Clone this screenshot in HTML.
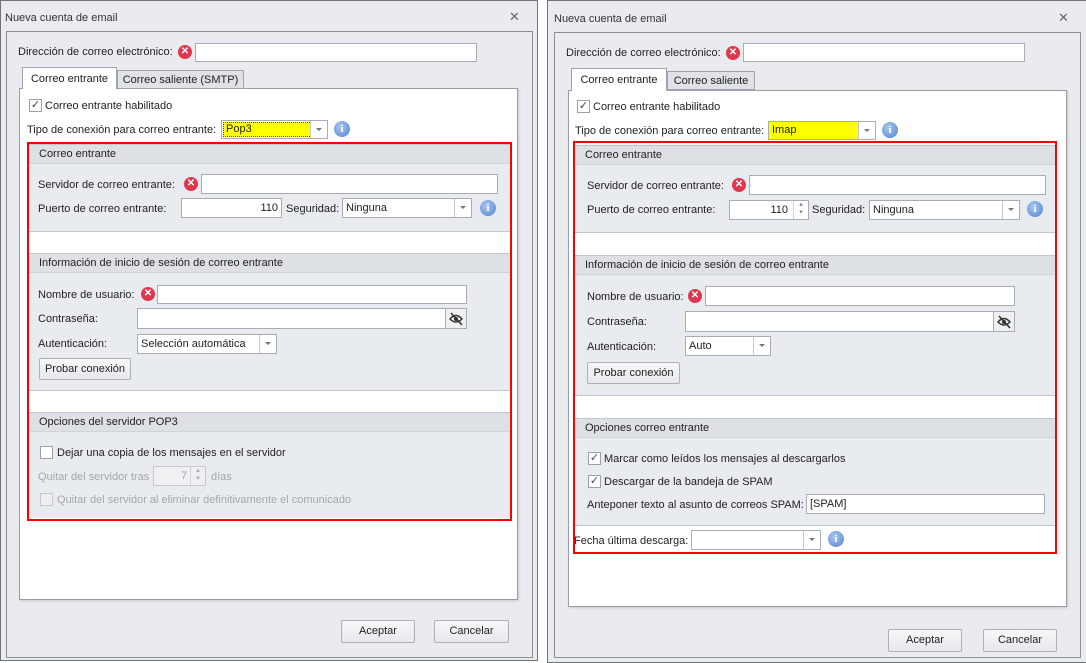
<!DOCTYPE html>
<html><head><meta charset="utf-8">
<style>
*{box-sizing:border-box;margin:0;padding:0}
body{width:1086px;height:662px;background:#fff;position:relative;overflow:hidden;font-family:"Liberation Sans",sans-serif;font-size:11px;color:#222}
.a{position:absolute}
.win{position:absolute;background:#e9ebee;border:1px solid #6f747a}
.frame{position:absolute;border:1px solid #8a8f96}
.t{position:absolute;white-space:nowrap;line-height:14px}
.dis{color:#a3a7ac}
.in{position:absolute;background:#fff;border:1px solid #a9adb3;white-space:nowrap}
.page{position:absolute;background:#fff;border:1px solid #9a9ea4;box-shadow:1px 1px 2px rgba(0,0,0,.15)}
.tab{position:absolute;border:1px solid #a0a4aa;background:#dfe2e6;text-align:center;line-height:18px;white-space:nowrap}
.tab.on{background:#fff;border-bottom:none}
.red{position:absolute;border:2px solid #f00;z-index:5}
.gh{position:absolute;background:#dde0e5;border-top:1px solid #c3c7cc;border-bottom:1px solid #d0d3d7;line-height:18px;padding-left:10px;white-space:nowrap}
.gc{position:absolute;background:#e8ebef;border-bottom:1px solid #c3c7cc}
.err{position:absolute;width:14px;height:14px;border-radius:50%;background:#e0374f;color:#fff;font-size:10px;font-weight:bold;line-height:14px;text-align:center}
.info{position:absolute;width:16px;height:16px;border-radius:50%;background:radial-gradient(circle at 40% 35%,#a9c7f0,#4f82d2);color:#fff;font:bold 11px "Liberation Serif",serif;line-height:16px;text-align:center}
.dd{position:absolute;top:0;right:0;bottom:0;width:17px;border-left:1px solid #c5c8cc;background:#fff}
.dd:after{content:"";position:absolute;left:5px;top:7px;border:3px solid transparent;border-top:3px solid #777}
.cb{position:absolute;width:13px;height:13px;border:1px solid #9da1a6;background:#fff;font-size:11px;line-height:11px;text-align:center;color:#444}
.btn{position:absolute;border:1px solid #adb1b6;border-radius:2px;background:linear-gradient(#f6f7f8,#e6e8eb);text-align:center;line-height:21px;white-space:nowrap}
</style></head><body>

<!-- LEFT WINDOW -->
<div class="win" style="left:0;top:0;width:538px;height:661px"></div>
<div class="t" style="left:5px;top:11px;color:#333">Nueva cuenta de email</div>
<div class="t" style="left:509px;top:10px;color:#666;font-size:13px">✕</div>
<div class="frame" style="left:6px;top:31px;width:527px;height:627px"></div>
<div class="t" style="left:18px;top:45px">Dirección de correo electrónico:</div>
<div class="err" style="left:178px;top:45px">✕</div>
<div class="in" style="left:195px;top:43px;width:282px;height:19px"></div>
<div class="page" style="left:19px;top:88px;width:499px;height:512px"></div>
<div class="tab" style="left:117px;top:70px;width:127px;height:19px">Correo saliente (SMTP)</div>
<div class="tab on" style="left:22px;top:67px;width:95px;height:22px;line-height:22px">Correo entrante</div>
<div class="cb" style="left:29px;top:99px">✓</div>
<div class="t" style="left:45px;top:99px">Correo entrante habilitado</div>
<div class="t" style="left:27px;top:123px">Tipo de conexión para correo entrante:</div>
<div class="in" style="left:221px;top:120px;width:107px;height:19px"><div class="a" style="left:1px;top:1px;width:93px;height:15px;background:#ff0;border:1px dotted #444;padding-left:2px;line-height:13px">Pop3</div><div class="dd"></div></div>
<div class="info" style="left:334px;top:121px">i</div>
<div class="red" style="left:27px;top:142px;width:485px;height:379px"></div>
<div class="gh" style="left:29px;top:144px;width:481px;height:20px">Correo entrante</div>
<div class="gc" style="left:29px;top:164px;width:481px;height:68px"></div>
<div class="t" style="left:38px;top:178px">Servidor de correo entrante:</div>
<div class="err" style="left:184px;top:177px">✕</div>
<div class="in" style="left:201px;top:174px;width:297px;height:20px"></div>
<div class="t" style="left:38px;top:202px">Puerto de correo entrante:</div>
<div class="in" style="left:181px;top:198px;width:101px;height:20px;text-align:right;padding-right:3px;line-height:18px">110</div>
<div class="t" style="left:286px;top:202px">Seguridad:</div>
<div class="in" style="left:342px;top:198px;width:130px;height:20px;line-height:18px;padding-left:3px">Ninguna<div class="dd"></div></div>
<div class="info" style="left:480px;top:200px">i</div>
<div class="gh" style="left:29px;top:253px;width:481px;height:20px">Información de inicio de sesión de correo entrante</div>
<div class="gc" style="left:29px;top:273px;width:481px;height:118px"></div>
<div class="t" style="left:38px;top:288px">Nombre de usuario:</div>
<div class="err" style="left:141px;top:287px">✕</div>
<div class="in" style="left:157px;top:285px;width:310px;height:19px"></div>
<div class="t" style="left:38px;top:312px">Contraseña:</div>
<div class="in" style="left:137px;top:308px;width:330px;height:21px"><div class="a" style="right:0;top:0;width:21px;height:19px;border-left:1px solid #a9adb3;background:#eef0f2"><svg width="21" height="19"><path d="M4 10 Q10 3 16 10 Q10 16 4 10Z" fill="none" stroke="#333" stroke-width="1.4"/><circle cx="10" cy="10" r="2" fill="#333"/><path d="M5 4 L16 16" stroke="#333" stroke-width="1.6"/></svg></div></div>
<div class="t" style="left:38px;top:337px">Autenticación:</div>
<div class="in" style="left:137px;top:334px;width:140px;height:20px;line-height:18px;padding-left:3px">Selección automática<div class="dd"></div></div>
<div class="btn" style="left:39px;top:358px;width:92px;height:22px">Probar conexión</div>
<div class="gh" style="left:29px;top:412px;width:481px;height:20px">Opciones del servidor POP3</div>
<div class="gc" style="left:29px;top:432px;width:481px;height:86px;border-bottom:none"></div>
<div class="cb" style="left:40px;top:446px"></div>
<div class="t" style="left:57px;top:446px">Dejar una copia de los mensajes en el servidor</div>
<div class="t dis" style="left:38px;top:470px">Quitar del servidor tras</div>
<div class="in" style="left:153px;top:466px;width:53px;height:20px;border-color:#c5c8cc;background:#eef0f2;color:#a3a7ac;line-height:18px"><span class="a" style="left:27px">7</span><div class="a" style="right:0;top:0;width:15px;height:18px;border-left:1px solid #d0d3d7;font-size:7px;line-height:8px;text-align:center">▴<br>▾</div></div>
<div class="t dis" style="left:211px;top:470px">días</div>
<div class="cb" style="left:40px;top:493px;border-color:#c5c8cc;background:#eef0f2"></div>
<div class="t dis" style="left:57px;top:493px">Quitar del servidor al eliminar definitivamente el comunicado</div>
<div class="btn" style="left:341px;top:620px;width:74px;height:23px">Aceptar</div>
<div class="btn" style="left:434px;top:620px;width:75px;height:23px">Cancelar</div>

<!-- RIGHT WINDOW -->
<div class="win" style="left:547px;top:0;width:540px;height:663px"></div>
<div class="t" style="left:554px;top:12px;color:#333">Nueva cuenta de email</div>
<div class="t" style="left:1058px;top:11px;color:#666;font-size:13px">✕</div>
<div class="frame" style="left:554px;top:32px;width:527px;height:626px"></div>
<div class="t" style="left:566px;top:46px">Dirección de correo electrónico:</div>
<div class="err" style="left:726px;top:46px">✕</div>
<div class="in" style="left:743px;top:43px;width:282px;height:19px"></div>
<div class="page" style="left:568px;top:90px;width:499px;height:517px"></div>
<div class="tab" style="left:667px;top:71px;width:88px;height:19px">Correo saliente</div>
<div class="tab on" style="left:571px;top:68px;width:96px;height:23px;line-height:22px">Correo entrante</div>
<div class="cb" style="left:577px;top:100px">✓</div>
<div class="t" style="left:593px;top:100px">Correo entrante habilitado</div>
<div class="t" style="left:575px;top:124px">Tipo de conexión para correo entrante:</div>
<div class="in" style="left:768px;top:121px;width:108px;height:19px"><div class="a" style="left:0;top:0;width:91px;height:17px;background:#ff0;padding-left:3px;line-height:17px">Imap</div><div class="dd"></div></div>
<div class="info" style="left:882px;top:122px">i</div>
<div class="red" style="left:573px;top:141px;width:484px;height:413px"></div>
<div class="gh" style="left:575px;top:145px;width:481px;height:20px">Correo entrante</div>
<div class="gc" style="left:575px;top:165px;width:481px;height:68px"></div>
<div class="t" style="left:587px;top:179px">Servidor de correo entrante:</div>
<div class="err" style="left:732px;top:178px">✕</div>
<div class="in" style="left:749px;top:175px;width:297px;height:20px"></div>
<div class="t" style="left:587px;top:203px">Puerto de correo entrante:</div>
<div class="in" style="left:729px;top:200px;width:80px;height:20px;line-height:18px"><span class="a" style="right:20px">110</span><div class="a" style="right:0;top:0;width:15px;height:18px;border-left:1px solid #d0d3d7;font-size:7px;line-height:8px;text-align:center;color:#888">▴<br>▾</div></div>
<div class="t" style="left:812px;top:203px">Seguridad:</div>
<div class="in" style="left:869px;top:200px;width:151px;height:20px;line-height:18px;padding-left:3px">Ninguna<div class="dd"></div></div>
<div class="info" style="left:1027px;top:201px">i</div>
<div class="gh" style="left:575px;top:255px;width:481px;height:20px">Información de inicio de sesión de correo entrante</div>
<div class="gc" style="left:575px;top:275px;width:481px;height:121px"></div>
<div class="t" style="left:587px;top:290px">Nombre de usuario:</div>
<div class="err" style="left:688px;top:289px">✕</div>
<div class="in" style="left:705px;top:286px;width:310px;height:20px"></div>
<div class="t" style="left:587px;top:315px">Contraseña:</div>
<div class="in" style="left:685px;top:311px;width:330px;height:21px"><div class="a" style="right:0;top:0;width:21px;height:19px;border-left:1px solid #a9adb3;background:#eef0f2"><svg width="21" height="19"><path d="M4 10 Q10 3 16 10 Q10 16 4 10Z" fill="none" stroke="#333" stroke-width="1.4"/><circle cx="10" cy="10" r="2" fill="#333"/><path d="M5 4 L16 16" stroke="#333" stroke-width="1.6"/></svg></div></div>
<div class="t" style="left:587px;top:340px">Autenticación:</div>
<div class="in" style="left:685px;top:336px;width:86px;height:20px;line-height:18px;padding-left:3px">Auto<div class="dd"></div></div>
<div class="btn" style="left:587px;top:362px;width:93px;height:22px">Probar conexión</div>
<div class="gh" style="left:575px;top:418px;width:481px;height:20px">Opciones correo entrante</div>
<div class="gc" style="left:575px;top:438px;width:481px;height:88px"></div>
<div class="cb" style="left:588px;top:452px">✓</div>
<div class="t" style="left:604px;top:452px">Marcar como leídos los mensajes al descargarlos</div>
<div class="cb" style="left:588px;top:475px">✓</div>
<div class="t" style="left:604px;top:475px">Descargar de la bandeja de SPAM</div>
<div class="t" style="left:587px;top:498px">Anteponer texto al asunto de correos SPAM:</div>
<div class="in" style="left:806px;top:494px;width:239px;height:20px;line-height:18px;padding-left:3px">[SPAM]</div>
<div class="t" style="left:574px;top:534px">Fecha última descarga:</div>
<div class="in" style="left:691px;top:530px;width:130px;height:20px"><div class="dd"></div></div>
<div class="info" style="left:828px;top:531px">i</div>
<div class="btn" style="left:888px;top:629px;width:74px;height:23px">Aceptar</div>
<div class="btn" style="left:983px;top:629px;width:74px;height:23px">Cancelar</div>
</body></html>
